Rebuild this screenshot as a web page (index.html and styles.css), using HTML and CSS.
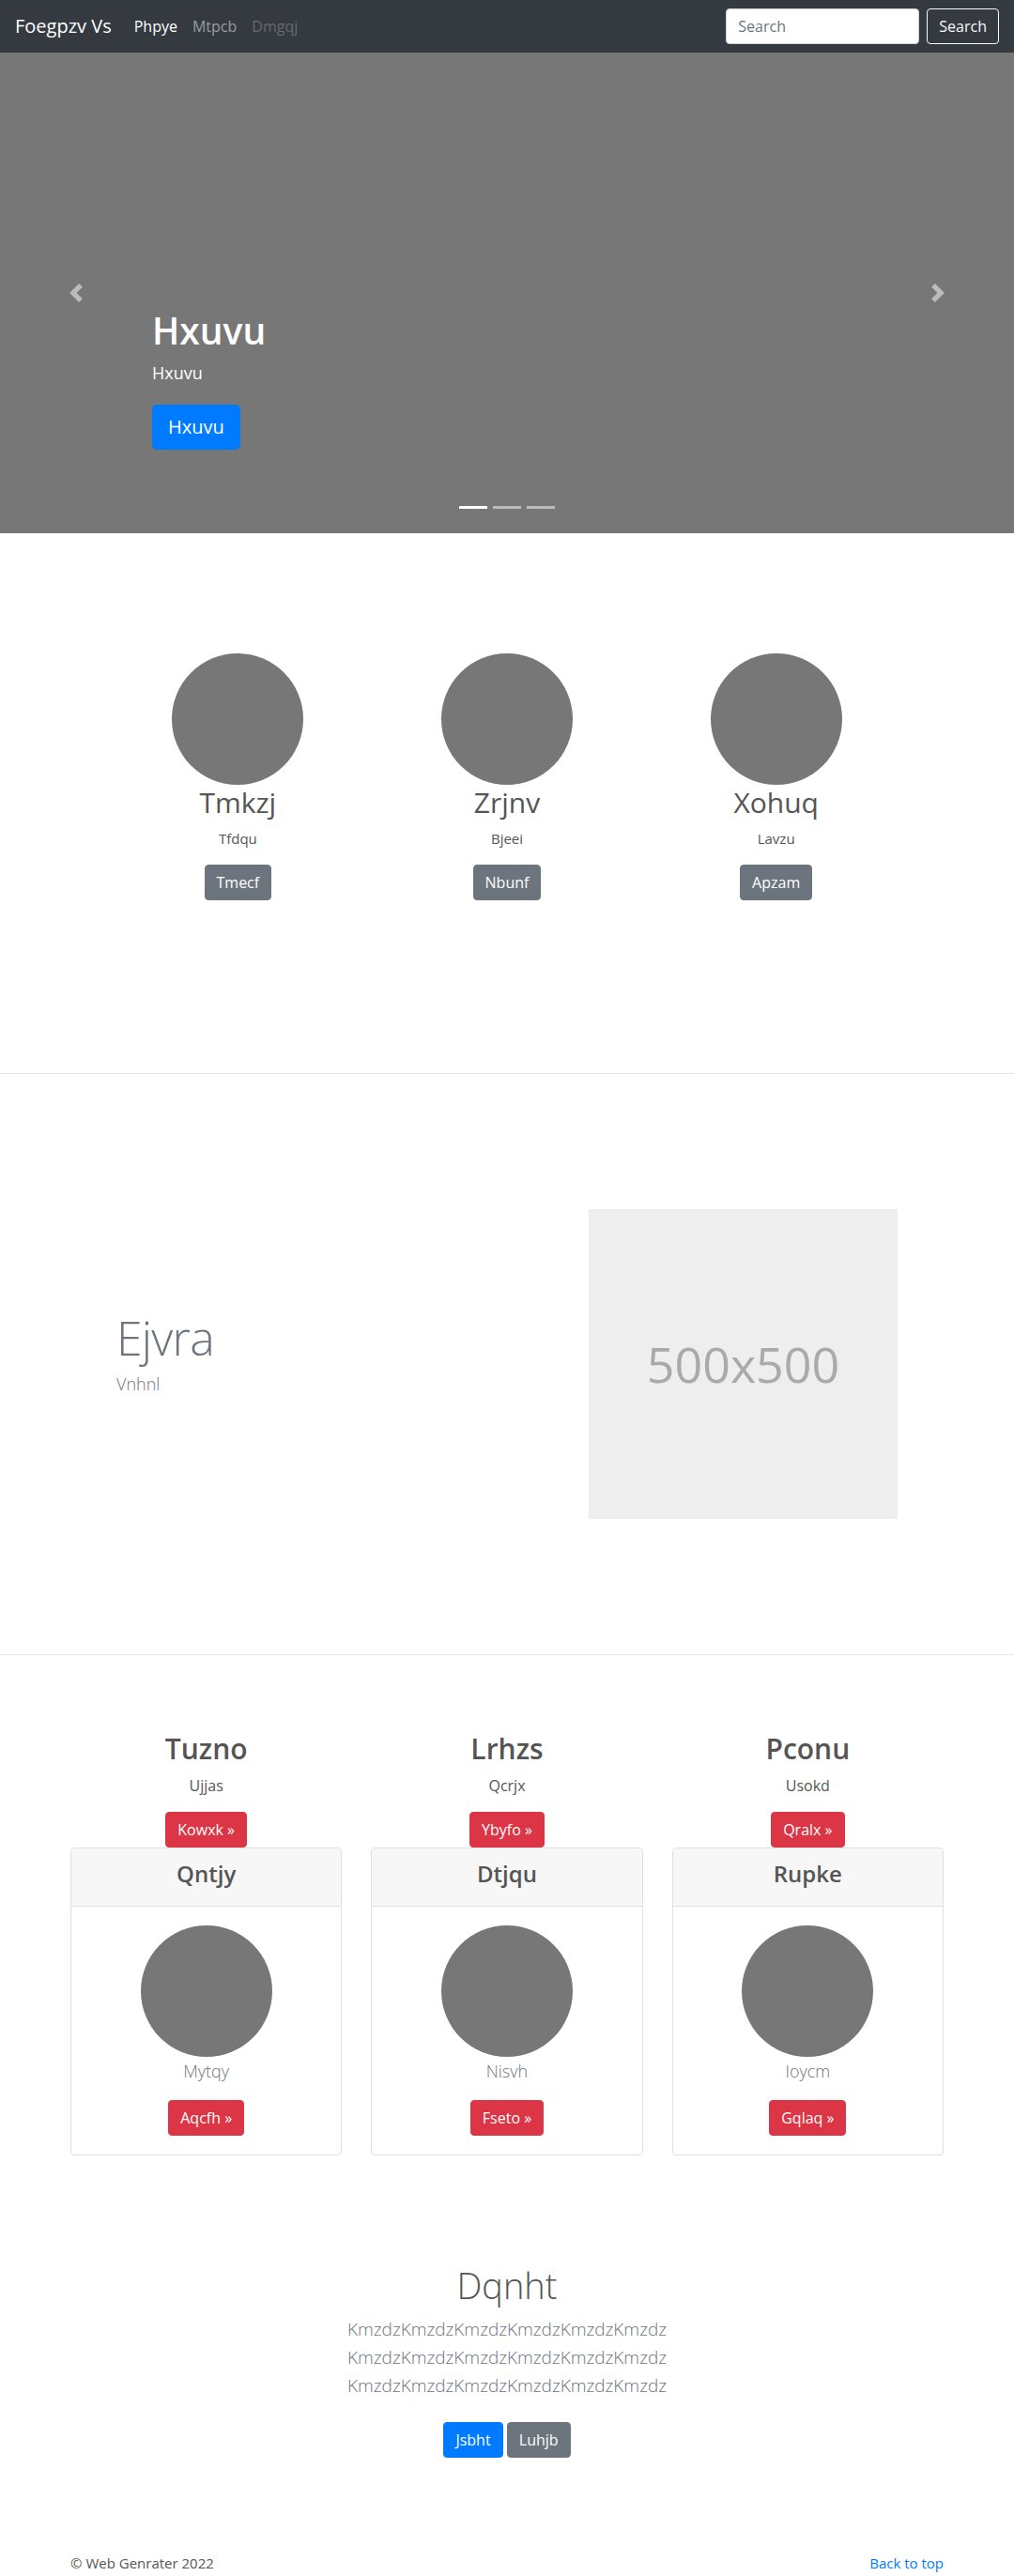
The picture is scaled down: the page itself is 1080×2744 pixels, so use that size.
FILE: index.html
```html
<!DOCTYPE html>
<html lang="en">
<head>
<meta charset="utf-8">
<title>Foegpzv Vs</title>
<link rel="stylesheet" href="styles.css">
</head>
<body>
<header class="navbar">
  <a class="brand" href="#">Foegpzv Vs</a>
  <nav class="nav">
    <a class="nav-link active" href="#">Phpye</a>
    <a class="nav-link" href="#">Mtpcb</a>
    <a class="nav-link disabled" href="#">Dmgqj</a>
  </nav>
  <form class="search">
    <input class="search-input" type="text" placeholder="Search">
    <button class="btn btn-outline-light" type="button">Search</button>
  </form>
</header>

<section class="carousel">
  <a class="control prev" href="#" aria-label="Previous">
    <svg width="20" height="20" viewBox="0 0 8 8"><path fill="#bbb" d="M5.25 0l-4 4 4 4 1.5-1.5L4.25 4l2.5-2.5L5.25 0z"/></svg>
  </a>
  <div class="caption">
    <h1 class="caption-title">Hxuvu</h1>
    <p class="caption-text">Hxuvu</p>
    <div><a class="btn btn-lg btn-primary" href="#">Hxuvu</a></div>
  </div>
  <a class="control next" href="#" aria-label="Next">
    <svg width="20" height="20" viewBox="0 0 8 8"><path fill="#bbb" d="M2.75 0l-1.5 1.5L3.75 4l-2.5 2.5L2.75 8l4-4-4-4z"/></svg>
  </a>
  <ol class="indicators">
    <li class="active"></li>
    <li></li>
    <li></li>
  </ol>
</section>

<section class="marketing">
  <div class="m-col">
    <div class="circle"></div>
    <h2 class="m-title">Tmkzj</h2>
    <p class="m-text">Tfdqu</p>
    <p class="m-action"><a class="btn btn-secondary" href="#">Tmecf</a></p>
  </div>
  <div class="m-col">
    <div class="circle"></div>
    <h2 class="m-title">Zrjnv</h2>
    <p class="m-text">Bjeei</p>
    <p class="m-action"><a class="btn btn-secondary" href="#">Nbunf</a></p>
  </div>
  <div class="m-col">
    <div class="circle"></div>
    <h2 class="m-title">Xohuq</h2>
    <p class="m-text">Lavzu</p>
    <p class="m-action"><a class="btn btn-secondary" href="#">Apzam</a></p>
  </div>
</section>

<hr class="divider divider-first">

<section class="featurette">
  <div class="f-text">
    <h2 class="f-title">Ejvra</h2>
    <p class="f-sub">Vnhnl</p>
  </div>
  <div class="f-image">500x500</div>
</section>

<hr class="divider">

<section class="features">
  <div class="feat-col">
    <h2 class="feat-title">Tuzno</h2>
    <p class="feat-text">Ujjas</p>
    <p class="feat-action"><a class="btn btn-danger" href="#">Kowxk »</a></p>
    <div class="card">
      <div class="card-header"><h4 class="card-title">Qntjy</h4></div>
      <div class="card-body">
        <div class="circle"></div>
        <p class="card-text">Mytqy</p>
        <a class="btn btn-danger" href="#">Aqcfh »</a>
      </div>
    </div>
  </div>
  <div class="feat-col">
    <h2 class="feat-title">Lrhzs</h2>
    <p class="feat-text">Qcrjx</p>
    <p class="feat-action"><a class="btn btn-danger" href="#">Ybyfo »</a></p>
    <div class="card">
      <div class="card-header"><h4 class="card-title">Dtjqu</h4></div>
      <div class="card-body">
        <div class="circle"></div>
        <p class="card-text">Nisvh</p>
        <a class="btn btn-danger" href="#">Fseto »</a>
      </div>
    </div>
  </div>
  <div class="feat-col">
    <h2 class="feat-title">Pconu</h2>
    <p class="feat-text">Usokd</p>
    <p class="feat-action"><a class="btn btn-danger" href="#">Qralx »</a></p>
    <div class="card">
      <div class="card-header"><h4 class="card-title">Rupke</h4></div>
      <div class="card-body">
        <div class="circle"></div>
        <p class="card-text">Ioycm</p>
        <a class="btn btn-danger" href="#">Gqlaq »</a>
      </div>
    </div>
  </div>
</section>

<section class="jumbo">
  <h1 class="jumbo-title">Dqnht</h1>
  <p class="jumbo-lead">KmzdzKmzdzKmzdzKmzdzKmzdzKmzdz KmzdzKmzdzKmzdzKmzdzKmzdzKmzdz KmzdzKmzdzKmzdzKmzdzKmzdzKmzdz</p>
  <p class="jumbo-actions"><a class="btn btn-primary" href="#">Jsbht</a> <a class="btn btn-secondary" href="#">Luhjb</a></p>
</section>

<footer class="footer">
  <p class="footer-copy">© Web Genrater 2022</p>
  <p class="footer-top"><a href="#">Back to top</a></p>
</footer>
</body>
</html>
```

FILE: styles.css
```css
* { box-sizing: border-box; }

html, body {
  margin: 0;
  padding: 0;
}

body {
  font-family: "Open Sans", "Noto Sans", "Liberation Sans", sans-serif;
  font-size: 16px;
  line-height: 1.5;
  color: #555;
  background: #fff;
}

a { text-decoration: none; }

/* ---------- buttons ---------- */
.btn {
  display: inline-block;
  padding: 6px 12px;
  font-size: 16px;
  line-height: 24px;
  font-weight: 400;
  border: 1px solid transparent;
  border-radius: 4px;
  color: #fff;
  text-align: center;
  font-family: inherit;
  cursor: pointer;
}
.btn-lg {
  padding: 8px 16px;
  font-size: 20px;
  line-height: 30px;
  border-radius: 5px;
}
.btn-primary { background: #007bff; border-color: #007bff; }
.btn-secondary { background: #6c757d; border-color: #6c757d; }
.btn-danger { background: #dc3545; border-color: #dc3545; }
.btn-outline-light { background: transparent; border-color: #f8f9fa; color: #f8f9fa; }

/* ---------- navbar ---------- */
.navbar {
  display: flex;
  align-items: center;
  height: 56px;
  padding: 8px 16px;
  background: #343a40;
}
.brand {
  font-size: 20px;
  line-height: 30px;
  color: #fff;
  margin-right: 16px;
}
.nav { display: flex; }
.nav-link {
  padding: 8px;
  color: rgba(255, 255, 255, 0.5);
  line-height: 24px;
}
.nav-link.active { color: #fff; }
.nav-link.disabled { color: rgba(255, 255, 255, 0.25); }
.search {
  margin: 0 0 0 auto;
  display: flex;
  align-items: center;
}
.search-input {
  width: 206px;
  height: 38px;
  padding: 6px 12px;
  margin-right: 8px;
  font-family: inherit;
  font-size: 16px;
  color: #495057;
  background: #fff;
  border: 1px solid #ced4da;
  border-radius: 4px;
}
.search-input::placeholder { color: #6c757d; }

/* ---------- carousel ---------- */
.carousel {
  position: relative;
  height: 512px;
  background: #777;
  overflow: hidden;
}
.control {
  position: absolute;
  top: 0;
  bottom: 0;
  width: 162px;
  display: flex;
  align-items: center;
  justify-content: center;
}
.control.prev { left: 0; }
.control.next { right: 0; }
.control svg { display: block; }
.caption {
  position: absolute;
  left: 162px;
  right: 162px;
  bottom: 89px;
  color: #fff;
  z-index: 2;
}
.caption-title {
  margin: 0 0 8px;
  font-size: 39px;
  line-height: 48px;
  font-weight: 600;
}
.caption-text {
  margin: 0 0 20px;
  font-size: 18px;
  line-height: 27px;
}
.indicators {
  position: absolute;
  left: 0;
  right: 0;
  bottom: 26px;
  margin: 0;
  padding: 0;
  list-style: none;
  display: flex;
  justify-content: center;
  gap: 6px;
}
.indicators li {
  width: 30px;
  height: 3px;
  background: rgba(255, 255, 255, 0.5);
}
.indicators li.active { background: #fff; }

/* ---------- marketing ---------- */
.marketing {
  width: 860px;
  margin: 128px auto 0;
  display: grid;
  grid-template-columns: repeat(3, 1fr);
  text-align: center;
}
.circle {
  width: 140px;
  height: 140px;
  border-radius: 50%;
  background: #777;
  margin: 0 auto;
}
.m-title {
  margin: 0 0 8px;
  font-size: 30px;
  line-height: 38px;
  font-weight: 400;
  color: #555;
}
.m-text {
  margin: 0 0 16px;
  font-size: 15px;
}
.m-action { margin: 0; }

/* ---------- dividers ---------- */
.divider {
  border: 0;
  border-top: 1px solid #e6e6e6;
  margin: 0;
}
.divider-first { margin-top: 184px; }

/* ---------- featurette ---------- */
.featurette {
  width: 860px;
  margin: 144px auto;
  display: flex;
  align-items: center;
}
.f-text {
  flex: 1;
  padding-left: 14px;
  padding-bottom: 18px;
}
.f-title {
  margin: 0;
  font-size: 50px;
  line-height: 1;
  font-weight: 300;
  letter-spacing: -0.8px;
  color: #6c757d;
}
.f-sub {
  margin: 11px 0 0;
  font-size: 18px;
  line-height: 27px;
  font-weight: 300;
  color: #6c757d;
}
.f-image {
  width: 329px;
  height: 330px;
  margin-right: 14px;
  background: #eee;
  color: #aaa;
  font-size: 52px;
  display: flex;
  align-items: center;
  justify-content: center;
}

/* ---------- features + cards ---------- */
.features {
  width: 930px;
  margin: 81px auto 0;
  display: grid;
  grid-template-columns: repeat(3, 1fr);
  column-gap: 31px;
  text-align: center;
}
.feat-title {
  margin: 0 0 8px;
  font-size: 30px;
  line-height: 38px;
  font-weight: 600;
  color: #555;
}
.feat-text { margin: 0 0 16px; }
.feat-action { margin: 0; }
.card {
  border: 1px solid #dfdfdf;
  border-radius: 4px;
  overflow: hidden;
}
.card-header {
  padding: 12px 20px;
  background: #f7f7f7;
  border-bottom: 1px solid #dfdfdf;
}
.card-title {
  margin: 0 0 8px;
  font-size: 24px;
  line-height: 29px;
  font-weight: 600;
  color: #555;
}
.card-body { padding: 20px; }
.card-text {
  margin: 0 0 16px;
  font-size: 18px;
  line-height: 30px;
  font-weight: 300;
  color: #6c757d;
}

/* ---------- jumbotron ---------- */
.jumbo {
  padding-top: 114px;
  text-align: center;
}
.jumbo-title {
  margin: 0 0 8px;
  font-size: 38px;
  line-height: 48px;
  font-weight: 300;
  color: #555;
}
.jumbo-lead {
  width: 450px;
  margin: 0 auto 24px;
  font-size: 19px;
  line-height: 30px;
  font-weight: 300;
  color: #6c757d;
}
.jumbo-actions { margin: 0; }

/* ---------- footer ---------- */
.footer {
  width: 930px;
  margin: 100px auto 0;
  padding-bottom: 2px;
  display: flex;
  justify-content: space-between;
  font-size: 15px;
}
.footer p { margin: 0; line-height: 24px; }
.footer-top a { color: #007bff; }
```
